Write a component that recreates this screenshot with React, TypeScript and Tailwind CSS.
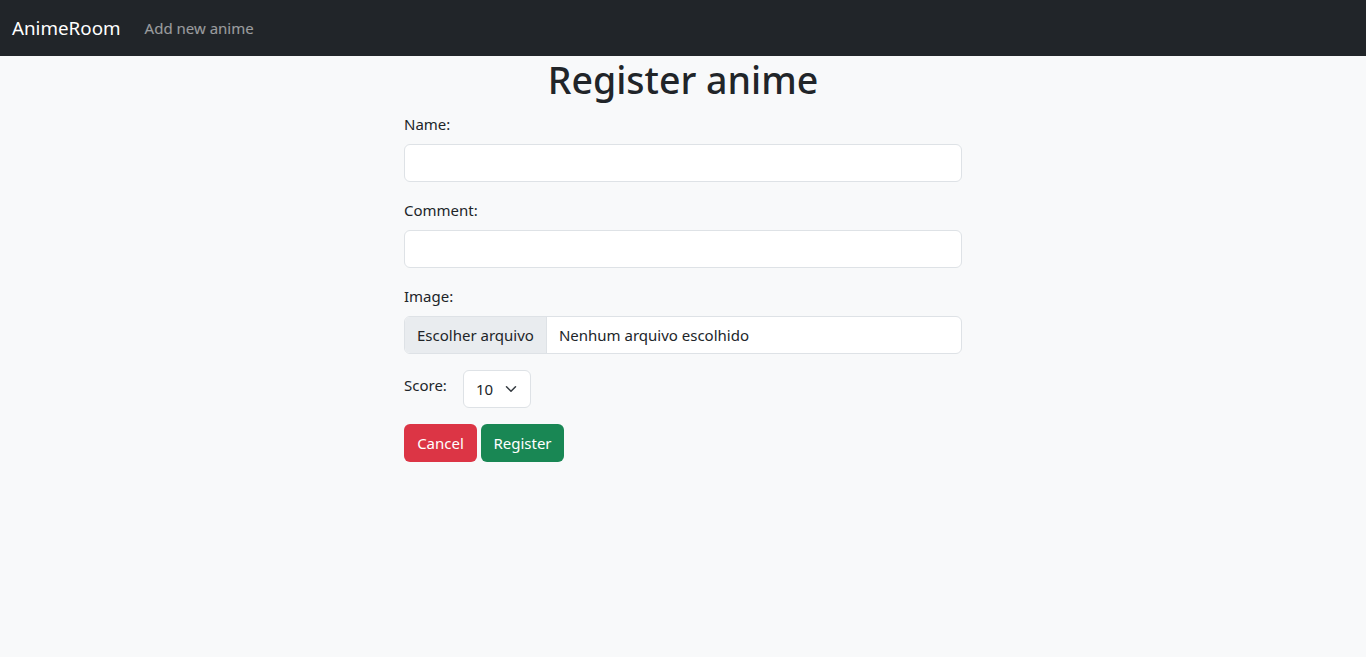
import React from "react";

export default function App() {
  const scores = [10, 9, 8, 7, 6, 5, 4, 3, 2, 1];

  return (
    <div className="min-h-[657px] bg-[#f8f9fa] text-[#212529] font-['Noto_Sans',sans-serif] text-[15px]">
      {/* navbar */}
      <nav className="h-14 bg-[#212529] flex items-center px-3">
        <span className="text-[18.8px] leading-[30px] text-white mr-4">AnimeRoom</span>
        <span className="px-2 text-[15px] text-white/55">Add new anime</span>
      </nav>

      {/* form */}
      <div className="w-[558px] mx-auto">
        <h1 className="text-[37.5px] leading-[48px] font-medium text-center mb-2">Register anime</h1>

        <div className="mb-4">
          <label className="block leading-6 mb-2">Name:</label>
          <input className="block w-full h-[38px] bg-white border border-[#dee2e6] rounded-md px-3" />
        </div>

        <div className="mb-4">
          <label className="block leading-6 mb-2">Comment:</label>
          <input className="block w-full h-[38px] bg-white border border-[#dee2e6] rounded-md px-3" />
        </div>

        <div className="mb-4">
          <label className="block leading-6 mb-2">Image:</label>
          <div className="flex h-[38px] bg-white border border-[#dee2e6] rounded-md overflow-hidden">
            <span className="flex items-center px-3 bg-[#e9ecef] border-r border-[#dee2e6]">Escolher arquivo</span>
            <span className="flex items-center px-3">Nenhum arquivo escolhido</span>
          </div>
        </div>

        <div className="mb-4 flex items-start gap-4">
          <label className="leading-6 mt-[3px]">Score:</label>
          <div className="relative">
            <select className="appearance-none h-[38px] w-[68px] bg-white border border-[#dee2e6] rounded-md pl-3 pr-9">
              {scores.map((s) => (
                <option key={s}>{s}</option>
              ))}
            </select>
            <svg
              className="absolute right-3 top-[13px] pointer-events-none"
              width="16"
              height="12"
              viewBox="0 0 16 16"
              fill="none"
              stroke="#343a40"
              strokeWidth="2"
              strokeLinecap="round"
              strokeLinejoin="round"
            >
              <path d="m2 5 6 6 6-6" />
            </svg>
          </div>
        </div>

        <div className="flex gap-1">
          <button className="h-[38px] w-[73px] rounded-md bg-[#dc3545] text-white">Cancel</button>
          <button className="h-[38px] w-[83px] rounded-md bg-[#198754] text-white">Register</button>
        </div>
      </div>
    </div>
  );
}
